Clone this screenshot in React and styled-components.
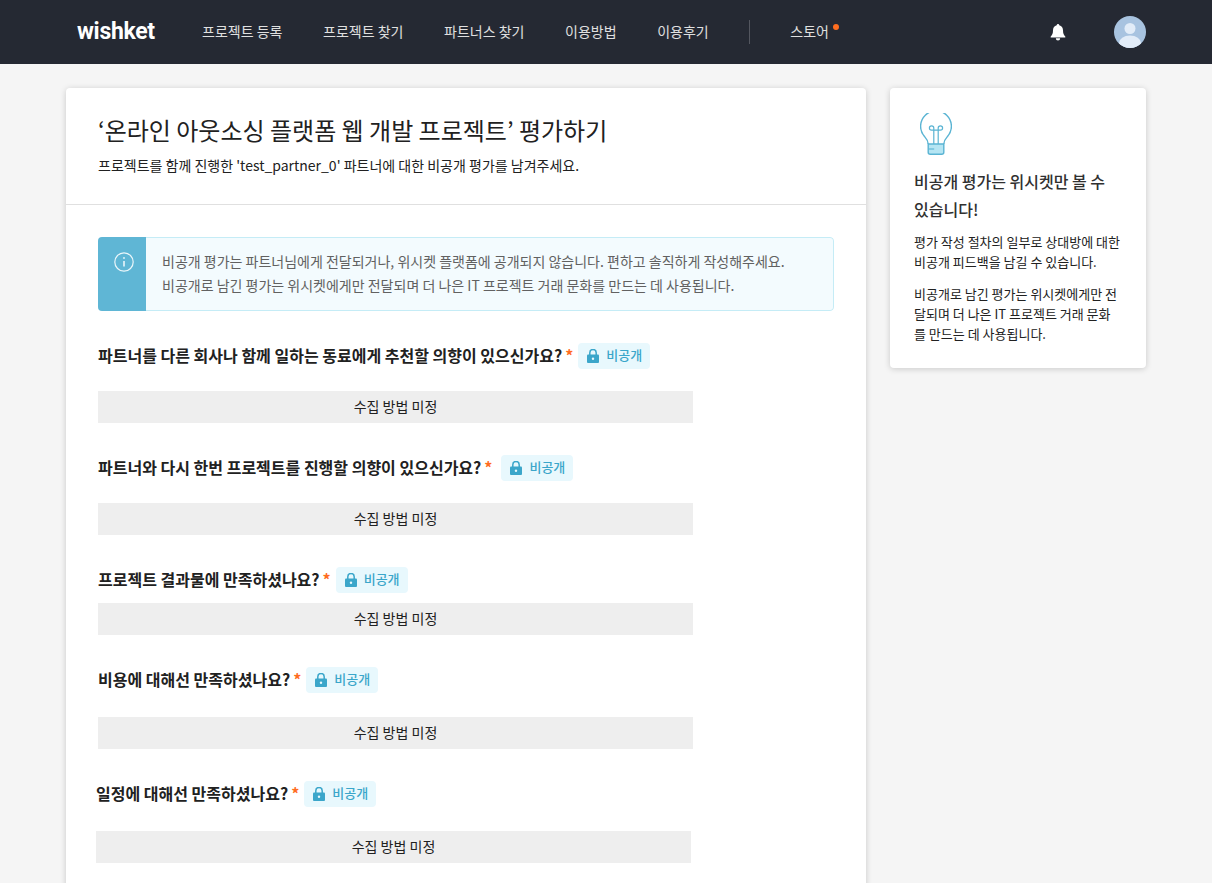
import React from 'react';
import styled, { createGlobalStyle } from 'styled-components';

const Global = createGlobalStyle`
  html, body { margin: 0; padding: 0; background: #f5f5f5; }
  body { font-family: "Noto Sans CJK KR", "Noto Sans", sans-serif; color: #212121; }
  * { box-sizing: border-box; }
`;
const Page = styled.div`height: 883px; overflow: hidden;`;
const Header = styled.header`
  height: 64px; background: #252933; display: flex; align-items: center; padding-left: 77px;
`;
const Logo = styled.div`
  width: 125px; font: 700 23px/1 "Roboto", "Liberation Sans", sans-serif; color: #fff; letter-spacing: -0.3px;
  padding-bottom: 2px;
`;
const Nav = styled.nav`display: flex; align-items: center; gap: 40.6px;`;
const NavItem = styled.a`
  font-size: 14px; line-height: 20px; color: #e0e0e0; position: relative; padding-bottom: 2px;
`;
const Divider = styled.span`width: 1px; height: 24px; background: #53565f; margin-right: -0.6px;`;
const Dot = styled.span`
  position: absolute; top: 3px; right: -10px; width: 6px; height: 6px; border-radius: 50%; background: #ff6d1f;
`;
const HeaderRight = styled.div`margin-left: auto; margin-right: 66px; display: flex; align-items: center; gap: 47px;`;
const Avatar = styled.svg`width: 32px; height: 32px; display: block; border-radius: 50%;`;
const Main = styled.main`
  display: flex; align-items: flex-start; gap: 24px; padding: 24px 66px 0;
`;
const Card = styled.section`
  width: 800px; background: #fff; border-radius: 4px; box-shadow: 0 1px 6px rgba(0,0,0,.18); flex: none;
`;
const CardHead = styled.div`padding: 24px 32px 22px; border-bottom: 1px solid #e0e0e0; height: 117px;`;
const Title = styled.h1`font-size: 24px; line-height: 36px; font-weight: 400; margin: 0 0 6px; color: #212121;`;
const Sub = styled.p`font-size: 14px; line-height: 22px; margin: 0; color: #212121;`;
const CardBody = styled.div`padding: 32px 32px 40px;`;
const Notice = styled.div`
  display: flex; height: 74px; border-radius: 4px; overflow: hidden; margin-bottom: 32px;
`;
const NoticeSide = styled.div`
  width: 48px; flex: none; background: #5fb6d5; display: flex; justify-content: center; padding: 15px 0 0 4px;
`;
const NoticeText = styled.div`
  flex: 1; padding: 0 0 2px 16px; display: flex; flex-direction: column; justify-content: center;
  font-size: 14px; line-height: 24px; color: #616161;
  background: #f3fbfe; border: 1px solid #c5ecf6; border-left: 0; border-radius: 0 4px 4px 0;
`;
const Question = styled.div`margin: 0 0 32px ${p => p.$shift || 0}px;`;
const QRow = styled.div`display: flex; align-items: center; height: 26px; margin-bottom: ${p => p.$gap}px;`;
const QText = styled.h3`font-size: 16px; line-height: 24px; font-weight: 700; margin: 0; padding-bottom: 2px; color: #212121;`;
const Star = styled.span`color: #ff6d1f; font-size: 16px; line-height: 24px; font-weight: 700; margin-left: 3px; padding-bottom: 2px;`;
const Chip = styled.span`
  display: inline-flex; align-items: center; gap: 7px; height: 26px; padding: 0 8px 0 9px; margin-left: ${p => p.$gap}px; border-radius: 4px;
  background: #e8f8fd; color: #3ba6ca; font-size: 13px;
`;
const ChipLabel = styled.span`line-height: 20px; padding-bottom: 2px; font-weight: 500;`;
const Bar = styled.div`
  width: 595px; height: 32px; background: #eeeeee; display: flex; align-items: center; justify-content: center;
  font-size: 14px; color: #212121; padding-bottom: 2px;
`;
const Side = styled.aside`
  width: 256px; height: 280px; background: #fff; border-radius: 4px; box-shadow: 0 1px 6px rgba(0,0,0,.18); padding: 24px; flex: none;
`;
const SideTitle = styled.h4`font-size: 16px; line-height: 28px; font-weight: 500; margin: 12px 0 9px; color: #303030;`;
const SideText = styled.p`font-size: 13px; line-height: 20px; margin: 0 0 12px; color: #212121;`;
const BulbArt = styled.svg`display: block; margin: 1px 0 0 6px;`;

const Lock = () => (
  <svg width="12" height="14" viewBox="0 0 12 14">
    <path d="M2.800 6V3.700a3.200 3.200 0 0 1 6.400 0V6" fill="none" stroke="#3ba6ca" strokeWidth="1.500" />
    <rect x="0" y="5.500" width="12" height="8.500" rx="1" fill="#3ba6ca" />
    <circle cx="6" cy="9.700" r="1.200" fill="#e8f8fd" />
  </svg>
);
const Bell = () => (
  <svg width="18" height="18" viewBox="0 0 18 18" fill="#fff">
    <path d="M9 1a1.300 1.300 0 0 1 1.300 1.200C12.600 2.800 14 4.800 14 7.200c0 3.400.8 4.800 2.200 6.200.4.400.2 1.100-.4 1.100H2.200c-.6 0-.8-.7-.4-1.100C3.200 12 4 10.600 4 7.200c0-2.400 1.400-4.400 3.700-5A1.300 1.300 0 0 1 9 1z" />
    <path d="M6.800 15.300h4.400a2.200 2.200 0 0 1-4.400 0z" />
  </svg>
);
const Info = () => (
  <svg width="20" height="20" viewBox="0 0 20 20" fill="none" stroke="#eaf6fa" strokeWidth="1.200">
    <circle cx="10" cy="10" r="9.200" />
    <path d="M10 9v5.500" strokeWidth="1.600" />
    <circle cx="10" cy="6" r=".9" fill="#eaf6fa" stroke="none" />
  </svg>
);
const Bulb = () => (
  <BulbArt width="32" height="42" viewBox="0 0 32 42" fill="none" stroke="#5ab4d3" strokeWidth="1.400">
    <path d="M8.200 31h15.600v8.200a2 2 0 0 1-2 2H10.200a2 2 0 0 1-2-2z" fill="#b5e5f3" />
    <path d="M8.200 31c0-3.500-1.500-5-3.700-7.500a15.400 15.400 0 1 1 23 0c-2.200 2.500-3.700 4-3.700 7.500" />
    <path d="M8.200 36h6" strokeWidth="1.100" />
    <path d="M13.800 31V15a2.200 2.200 0 1 0-2.200 2.200h8.800a2.200 2.200 0 1 0-2.200-2.200v16" strokeWidth="1.200" />
  </BulbArt>
);

const questions = [
  { text: '파트너를 다른 회사나 함께 일하는 동료에게 추천할 의향이 있으신가요?', gap: 22, chip: 5 },
  { text: '파트너와 다시 한번 프로젝트를 진행할 의향이 있으신가요?', gap: 22, chip: 9 },
  { text: '프로젝트 결과물에 만족하셨나요?', gap: 10, chip: 5 },
  { text: '비용에 대해선 만족하셨나요?', gap: 24, chip: 5 },
  { text: '일정에 대해선 만족하셨나요?', gap: 24, chip: 5, shift: -2 },
];
const navs = ['프로젝트 등록', '프로젝트 찾기', '파트너스 찾기', '이용방법', '이용후기'];

export default function App() {
  return (
    <Page>
      <Global />
      <Header>
        <Logo>wishket</Logo>
        <Nav>
          {navs.map(n => <NavItem key={n}>{n}</NavItem>)}
          <Divider />
          <NavItem>스토어<Dot /></NavItem>
        </Nav>
        <HeaderRight>
          <Bell />
          <Avatar viewBox="0 0 32 32">
            <rect width="32" height="32" fill="#a8c3e0" />
            <circle cx="16" cy="12.500" r="5.500" fill="#e2ecf8" />
            <ellipse cx="16" cy="27" rx="11" ry="7.500" fill="#e2ecf8" />
          </Avatar>
        </HeaderRight>
      </Header>
      <Main>
        <Card>
          <CardHead>
            <Title>‘온라인 아웃소싱 플랫폼 웹 개발 프로젝트’ 평가하기</Title>
            <Sub>프로젝트를 함께 진행한 'test_partner_0' 파트너에 대한 비공개 평가를 남겨주세요.</Sub>
          </CardHead>
          <CardBody>
            <Notice>
              <NoticeSide><Info /></NoticeSide>
              <NoticeText>
                <span>비공개 평가는 파트너님에게 전달되거나, 위시켓 플랫폼에 공개되지 않습니다. 편하고 솔직하게 작성해주세요.</span>
                <span>비공개로 남긴 평가는 위시켓에게만 전달되며 더 나은 IT 프로젝트 거래 문화를 만드는 데 사용됩니다.</span>
              </NoticeText>
            </Notice>
            {questions.map(q => (
              <Question key={q.text} $shift={q.shift}>
                <QRow $gap={q.gap}>
                  <QText>{q.text}</QText>
                  <Star>*</Star>
                  <Chip $gap={q.chip}><Lock /><ChipLabel>비공개</ChipLabel></Chip>
                </QRow>
                <Bar>수집 방법 미정</Bar>
              </Question>
            ))}
          </CardBody>
        </Card>
        <Side>
          <Bulb />
          <SideTitle>비공개 평가는 위시켓만 볼 수 있습니다!</SideTitle>
          <SideText>평가 작성 절차의 일부로 상대방에 대한 비공개 피드백을 남길 수 있습니다.</SideText>
          <SideText>비공개로 남긴 평가는 위시켓에게만 전달되며 더 나은 IT 프로젝트 거래 문화를 만드는 데 사용됩니다.</SideText>
        </Side>
      </Main>
    </Page>
  );
}
